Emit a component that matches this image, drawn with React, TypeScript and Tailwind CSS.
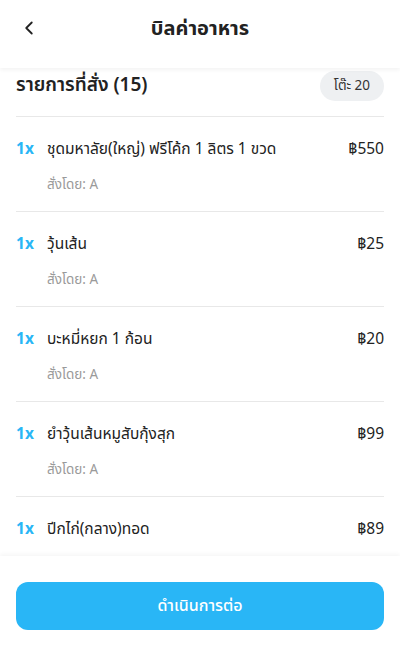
import { ChevronLeft } from "lucide-react";

const items = [
  { qty: 1, name: "ชุดมหาลัย(ใหญ่) ฟรีโค้ก 1 ลิตร 1 ขวด", price: 550, by: "A" },
  { qty: 1, name: "วุ้นเส้น", price: 25, by: "A" },
  { qty: 1, name: "บะหมี่หยก 1 ก้อน", price: 20, by: "A" },
  { qty: 1, name: "ยำวุ้นเส้นหมูสับกุ้งสุก", price: 99, by: "A" },
  { qty: 1, name: "ปีกไก่(กลาง)ทอด", price: 89, by: "A" },
];

export default function App() {
  return (
    <div
      className="h-[646px] w-[400px] flex flex-col bg-white text-[#222] overflow-hidden"
      style={{ fontFamily: '"Noto Sans Thai", "Noto Sans", "Liberation Sans", sans-serif' }}
    >
      {/* Header */}
      <header className="relative z-10 h-[68px] shrink-0 flex items-center justify-center bg-white shadow-[0_2px_4px_rgba(0,0,0,0.05)]">
        <button className="absolute left-[18px] top-[17px] text-[#222]">
          <ChevronLeft size={22} strokeWidth={2} />
        </button>
        <h1 className="text-[20px] font-bold -mt-[10px]">บิลค่าอาหาร</h1>
      </header>

      {/* List */}
      <main className="flex-1 overflow-hidden px-4">
        <div className="flex items-center justify-between pt-[3px] pb-[15px] border-b border-[#e8e8e8]">
          <h2 className="text-[19px] font-semibold leading-[30px]">รายการที่สั่ง (15)</h2>
          <span className="h-[30px] px-[14px] rounded-full bg-[#eef0f2] text-[13.5px] leading-[30px] text-[#333]">
            โต๊ะ 20
          </span>
        </div>

        {items.map((item, i) => (
          <div key={i} className="pt-[22px] pb-[15px] border-b border-[#e8e8e8]">
            <div className="flex items-center h-[22px]">
              <span className="w-[31px] text-[15.5px] font-bold text-[#29b6f6]">{item.qty}x</span>
              <span className="flex-1 text-[15.5px] text-[#222]">{item.name}</span>
              <span className="text-[15.5px] text-[#222]">฿{item.price}</span>
            </div>
            <div className="mt-[13px] h-[22px] pl-[31px] text-[13.5px] leading-[22px] text-[#9a9a9a]">
              สั่งโดย: {item.by}
            </div>
          </div>
        ))}
      </main>

      {/* Footer */}
      <footer className="relative z-10 shrink-0 bg-white px-4 pt-[26px] pb-4 shadow-[0_-2px_4px_rgba(0,0,0,0.04)]">
        <button className="w-full h-[48px] rounded-[12px] bg-[#29b6f6] text-white text-[16px] font-medium">
          ดำเนินการต่อ
        </button>
      </footer>
    </div>
  );
}
